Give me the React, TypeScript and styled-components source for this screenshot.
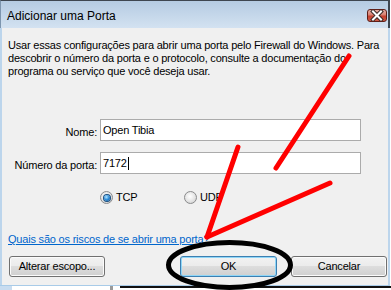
import styled, { createGlobalStyle } from 'styled-components'

const GlobalStyle = createGlobalStyle`
  html, body {
    margin: 0;
    padding: 0;
    background: #fff;
  }
  #root {
    width: 391px;
    height: 290px;
    overflow: hidden;
  }
`

const Screen = styled.div`
  position: relative;
  width: 391px;
  height: 290px;
  background: #fff;
  font-family: "Liberation Sans", Arial, sans-serif;
  color: #000;
  overflow: hidden;
`

const Window = styled.div`
  width: 390px;
  height: 286px;
  box-sizing: border-box;
  display: flex;
  flex-direction: column;
  border-bottom: 1px solid #a8cbe8;
`

const TitleBar = styled.div`
  height: 28px;
  flex: none;
  box-sizing: border-box;
  display: flex;
  align-items: flex-start;
  padding: 8px 1px 0 6px;
  border-top: 1px solid #3e4650;
  border-left: 1px solid #7d95ae;
  border-right: 2px solid #3e4650;
  background: linear-gradient(to bottom, #b5cbe2, #d3e2f1);
`

const Title = styled.span`
  font-size: 12px;
  line-height: 14px;
  color: #000;
`

const CloseButton = styled.div`
  margin-left: auto;
  width: 20px;
  height: 13px;
  box-sizing: border-box;
  border: 1px solid #5e1f18;
  border-radius: 3px;
  background: linear-gradient(to bottom, #e6aca2 0%, #d88070 45%, #c5402f 55%, #cf5a46 100%);
  display: flex;
  align-items: center;
  justify-content: center;
`

const Client = styled.div`
  flex: 1;
  display: flex;
  flex-direction: column;
  background: #f0f0f0;
  border-left: 2px solid #bcd5ec;
  border-right: 2px solid #bcd5ec;
  padding: 11px 0 0 6px;
  font-size: 11px;
  line-height: 13px;
  letter-spacing: -0.2px;
`

const Description = styled.p`
  margin: 0;
  white-space: nowrap;
`

const FormGrid = styled.div`
  margin-top: 41px;
  display: grid;
  grid-template-columns: 89px 261px;
  column-gap: 3px;
  row-gap: 11px;
`

const Label = styled.label`
  text-align: right;
  padding-top: 7px;
  white-space: nowrap;
`

const TextField = styled.div`
  height: 22px;
  box-sizing: border-box;
  border: 1px solid #ababab;
  background: #fff;
  padding: 0 2px;
  display: flex;
  align-items: center;
`

const Caret = styled.span`
  display: inline-block;
  width: 1px;
  height: 13px;
  background: #000;
  margin-left: 1px;
`

const RadioRow = styled.div`
  margin-top: 17px;
  padding-left: 92px;
  display: flex;
  height: 13px;
`

const RadioItem = styled.div<{ $width?: number }>`
  display: flex;
  align-items: flex-start;
  gap: 3px;
  width: ${p => (p.$width ? `${p.$width}px` : 'auto')};
`

const RadioCircle = styled.span<{ $checked?: boolean }>`
  width: 13px;
  height: 13px;
  box-sizing: border-box;
  border-radius: 50%;
  border: 1px solid #8a8b8c;
  background: radial-gradient(circle at 45% 40%, #ffffff 0%, #e4e4e4 55%, #c9c9c9 100%);
  display: flex;
  align-items: center;
  justify-content: center;

  &::after {
    content: '';
    display: ${p => (p.$checked ? 'block' : 'none')};
    width: 6px;
    height: 6px;
    border-radius: 50%;
    background: radial-gradient(circle at 40% 35%, #b4e6ff 0%, #2a8ad8 50%, #0d4c8a 100%);
    box-shadow: 0 0 0 1px #1b4f80;
  }
`

const HelpLink = styled.a`
  margin-top: 29px;
  color: #0066cc;
  text-decoration: underline;
  align-self: flex-start;
  cursor: pointer;
`

const ButtonRow = styled.div`
  margin-top: 10px;
  margin-left: 1px;
  padding-right: 1px;
  display: flex;
  gap: 14px;
`

const Button = styled.button<{ $default?: boolean; $push?: boolean }>`
  width: ${p => (p.$default ? 97 : 96)}px;
  height: 21px;
  box-sizing: border-box;
  padding: 0;
  margin-left: ${p => (p.$push ? 'auto' : '0')};
  font-family: inherit;
  font-size: 11px;
  line-height: 13px;
  letter-spacing: -0.2px;
  color: #000;
  border-radius: 3px;
  border: 1px solid ${p => (p.$default ? '#3c7fb1' : '#707070')};
  background: linear-gradient(to bottom, #f2f2f2 0%, #ebebeb 50%, #dddddd 50%, #cfcfcf 100%);
  box-shadow: inset 0 0 0 1px ${p => (p.$default ? '#8fd6f7' : '#fbfbfb')};
`

const Backdrop = styled.div`
  height: 4px;
  display: flex;
`

const BackdropPiece = styled.div<{ $width?: number; $color: string; $line?: boolean }>`
  width: ${p => (p.$width ? `${p.$width}px` : 'auto')};
  flex: ${p => (p.$width ? 'none' : '1')};
  background: ${p => p.$color};
  box-sizing: border-box;
  border-top: ${p => (p.$line ? '2px solid #111' : 'none')};
`

const Annotations = styled.svg`
  position: absolute;
  left: 0;
  top: 0;
  pointer-events: none;
`

export default function App() {
  return (
    <Screen>
      <GlobalStyle />
      <Window>
        <TitleBar>
          <Title>Adicionar uma Porta</Title>
          <CloseButton>
            <svg width="18" height="11" viewBox="0 0 18 11">
              <path d="M5 1.5 L13 9.5 M13 1.5 L5 9.5" stroke="#3a2a28" strokeWidth="4" strokeLinecap="square" />
              <path d="M5 1.5 L13 9.5 M13 1.5 L5 9.5" stroke="#fff" strokeWidth="2" strokeLinecap="square" />
            </svg>
          </CloseButton>
        </TitleBar>
        <Client>
          <Description>
            Usar essas configurações para abrir uma porta pelo Firewall do Windows. Para
            <br />
            descobrir o número da porta e o protocolo, consulte a documentação do
            <br />
            programa ou serviço que você deseja usar.
          </Description>
          <FormGrid>
            <Label>Nome:</Label>
            <TextField>Open Tibia</TextField>
            <Label>Número da porta:</Label>
            <TextField>
              7172
              <Caret />
            </TextField>
          </FormGrid>
          <RadioRow>
            <RadioItem $width={84}>
              <RadioCircle $checked />
              <span>TCP</span>
            </RadioItem>
            <RadioItem>
              <RadioCircle />
              <span>UDP</span>
            </RadioItem>
          </RadioRow>
          <HelpLink>Quais são os riscos de se abrir uma porta?</HelpLink>
          <ButtonRow>
            <Button>Alterar escopo...</Button>
            <Button $default $push>OK</Button>
            <Button>Cancelar</Button>
          </ButtonRow>
        </Client>
      </Window>
      <Backdrop>
        <BackdropPiece $width={12} $color="#c8dcf0" />
        <BackdropPiece $width={98} $color="#fff" />
        <BackdropPiece $width={3} $color="#9a9a9a" />
        <BackdropPiece $width={7} $color="#fff" />
        <BackdropPiece $color="#fff" $line />
      </Backdrop>
      <Annotations width="391" height="290" viewBox="0 0 391 290">
        <ellipse cx="229.5" cy="265" rx="61" ry="22.5" fill="none" stroke="#000" strokeWidth="5" />
        <g stroke="#ff0000" strokeWidth="5" strokeLinecap="round" fill="none">
          <line x1="349" y1="56" x2="276" y2="168" />
          <line x1="238" y1="147" x2="207" y2="237" />
          <line x1="330" y1="183" x2="207" y2="237" />
        </g>
      </Annotations>
    </Screen>
  )
}
